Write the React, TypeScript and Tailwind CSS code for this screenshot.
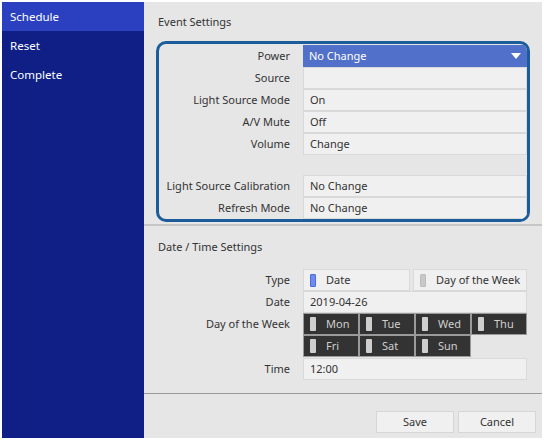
import { ReactNode } from 'react';

const font = { fontFamily: '"Noto Sans", "Open Sans", sans-serif' };

const eventRows: { label: string; value: string }[] = [
  { label: 'Source', value: '' },
  { label: 'Light Source Mode', value: 'On' },
  { label: 'A/V Mute', value: 'Off' },
  { label: 'Volume', value: 'Change' },
];

function Cell({ children }: { children?: ReactNode }) {
  return (
    <div className="h-[22px] flex items-center pl-[6px] bg-[#f0f0f0] border border-[#d9d9d9] text-[#333]">
      {children}
    </div>
  );
}

function Row({ label, children, labelWidth }: { label: string; children: ReactNode; labelWidth: string }) {
  return (
    <div className="flex">
      <div className={`${labelWidth} shrink-0 h-[22px] flex items-center justify-end pr-[13px] text-[#333]`}>{label}</div>
      <div className="flex-1">{children}</div>
    </div>
  );
}

function Day({ name }: { name: string }) {
  return (
    <div className="h-[22px] flex items-center bg-[#333] border border-[#9a9a9a] pl-[6px] gap-[10px] text-[#cfcfcf]">
      <span className="w-[6px] h-[14px] rounded-[1px] bg-[#cfcfcf]" />
      {name}
    </div>
  );
}

export default function App() {
  return (
    <div className="w-[544px] h-[440px] bg-white p-[2px] text-[11px]" style={font}>
      <div className="flex h-full">
        <nav className="w-[142px] shrink-0 bg-[#0f1f86] text-white text-[11.5px]">
          <div className="h-[29px] flex items-center pl-[8px] bg-[#2b40c0]">Schedule</div>
          <div className="h-[29px] flex items-center pl-[8px]">Reset</div>
          <div className="h-[29px] flex items-center pl-[8px]">Complete</div>
        </nav>

        <main className="flex-1 bg-[#e6e6e6] flex flex-col">
          <section className="pt-[12px] pb-[2px]">
            <h2 className="pl-[14px] h-[16px] leading-[16px] text-[#333]">Event Settings</h2>
            <div className="mt-[11px] ml-[12px] mr-[12px] border-[3px] border-[#1b5d9a] rounded-[10px] pt-[1px] overflow-hidden">
              <Row label="Power" labelWidth="w-[144px]">
                <div className="h-[22px] flex items-center justify-between pl-[6px] pr-[6px] bg-[#5070c9] text-white">
                  No Change
                  <svg width="10" height="7" viewBox="0 0 10 7">
                    <path d="M0 0 H10 L5 6 Z" fill="white" />
                  </svg>
                </div>
              </Row>
              {eventRows.map(r => (
                <Row key={r.label} label={r.label} labelWidth="w-[144px]">
                  <Cell>{r.value}</Cell>
                </Row>
              ))}
              <div className="h-[20px]" />
              <Row label="Light Source Calibration" labelWidth="w-[144px]">
                <Cell>No Change</Cell>
              </Row>
              <Row label="Refresh Mode" labelWidth="w-[144px]">
                <Cell>No Change</Cell>
              </Row>
            </div>
          </section>

          <div className="h-[2px] bg-[#c6c6c6]" />

          <section className="flex-1 pt-[13px] pr-[15px]">
            <h2 className="pl-[14px] h-[16px] leading-[16px] text-[#333]">Date / Time Settings</h2>
            <div className="mt-[14px]">
              <Row label="Type" labelWidth="w-[159px]">
                <div className="flex gap-[3px]">
                  <div className="w-[107px] h-[22px] flex items-center gap-[10px] pl-[6px] bg-[#f0f0f0] border border-[#d9d9d9] text-[#333]">
                    <span className="w-[6px] h-[13px] rounded-[1px] bg-[#6d8cf3] border border-[#4d6ad6]" />
                    Date
                  </div>
                  <div className="flex-1 h-[22px] flex items-center gap-[10px] pl-[6px] bg-[#f0f0f0] border border-[#d9d9d9] text-[#333]">
                    <span className="w-[6px] h-[13px] rounded-[1px] bg-[#c8c8c8] border border-[#bdbdbd]" />
                    Day of the Week
                  </div>
                </div>
              </Row>
              <Row label="Date" labelWidth="w-[159px]">
                <Cell>2019-04-26</Cell>
              </Row>
              <Row label="Day of the Week" labelWidth="w-[159px]">
                <div className="grid grid-cols-4">
                  <Day name="Mon" />
                  <Day name="Tue" />
                  <Day name="Wed" />
                  <Day name="Thu" />
                  <Day name="Fri" />
                  <Day name="Sat" />
                  <Day name="Sun" />
                </div>
              </Row>
              <div className="mt-[1px]">
                <Row label="Time" labelWidth="w-[159px]">
                  <Cell>12:00</Cell>
                </Row>
              </div>
            </div>
          </section>

          <div className="h-[1px] bg-[#9a9a9a]" />

          <footer className="h-[44px] flex items-end justify-end gap-[4px] pr-[6px] pb-[5px]">
            <button className="w-[78px] h-[22px] bg-[#f0f0f0] border border-[#d6d6d6] text-[#333]">Save</button>
            <button className="w-[78px] h-[22px] bg-[#f0f0f0] border border-[#d6d6d6] text-[#333]">Cancel</button>
          </footer>
        </main>
      </div>
    </div>
  );
}
